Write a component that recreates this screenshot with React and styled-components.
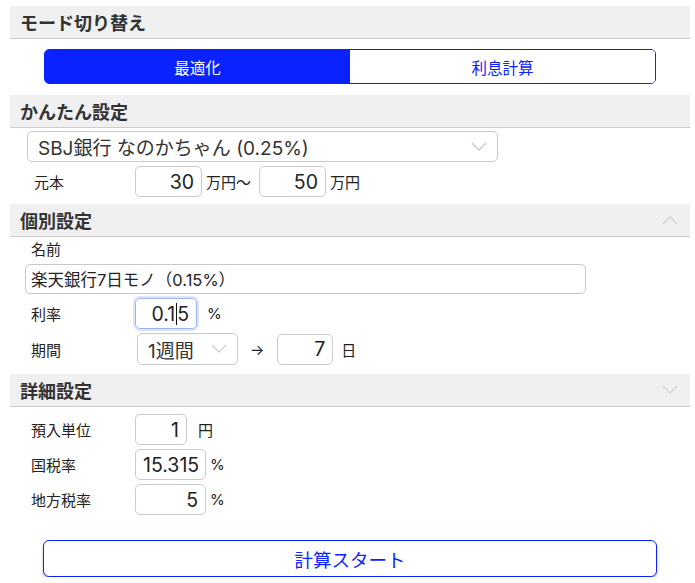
import React from "react";
import styled, { createGlobalStyle } from "styled-components";

const GlobalStyle = createGlobalStyle`
  body {
    margin: 0;
    background: #fff;
    font-family: "Inter", "Noto Sans CJK JP", sans-serif;
    color: #222;
  }
`;

const BLUE = "#0a22ff";

const Page = styled.div`
  width: 680px;
  padding: 6px 5px 0 10px;
`;

const Header = styled.div`
  height: 32px;
  background: #f0f0f0;
  border-bottom: 1px solid #cdcdcd;
  display: flex;
  align-items: center;
  justify-content: space-between;
  padding: 0 12px 0 10px;
  font-family: "Noto Sans CJK JP", sans-serif;
  font-size: 18px;
  font-weight: 700;
  color: #333;
`;

const Body = styled.div`
  padding: ${({ $pad }) => $pad || "0"};
  display: flex;
  flex-direction: column;
  gap: ${({ $gap }) => $gap || "4px"};
`;

const Segmented = styled.div`
  display: flex;
  height: 33px;
  border: 1px solid ${BLUE};
  border-radius: 5px;
  overflow: hidden;
`;

const Segment = styled.div`
  flex: 1;
  display: flex;
  align-items: center;
  justify-content: center;
  font-size: 15.5px;
  background: ${({ $active }) => ($active ? BLUE : "#fff")};
  color: ${({ $active }) => ($active ? "#fff" : BLUE)};
`;

const SelectBox = styled.div`
  width: ${({ $w }) => $w}px;
  height: ${({ $h }) => $h || 31}px;
  box-sizing: border-box;
  border: 1px solid #c9c9c9;
  border-radius: 5px;
  display: flex;
  align-items: center;
  justify-content: space-between;
  padding: 0 10px 0 10px;
  font-size: ${({ $fs }) => $fs || 19}px;
  color: #333;
  margin-left: ${({ $ml }) => $ml || 0}px;
`;

const Row = styled.div`
  display: flex;
  align-items: center;
  padding-left: ${({ $pl }) => $pl || 21}px;
  height: ${({ $h }) => $h || 31}px;
`;

const Label = styled.div`
  width: ${({ $w }) => $w || 104}px;
  font-size: 15px;
  color: #222;
`;

const NumInput = styled.input`
  width: ${({ $w }) => $w}px;
  height: 31px;
  box-sizing: border-box;
  border: 1px solid #cbcbcb;
  border-radius: 5px;
  text-align: right;
  padding: 0 7px;
  font-family: inherit;
  font-size: ${({ $fs }) => $fs || 19.5}px;
  color: #222;
  outline: none;
  margin-left: ${({ $ml }) => $ml || 0}px;
`;

const FocusField = styled.div`
  width: ${({ $w }) => $w}px;
  height: 31px;
  box-sizing: border-box;
  border: 1px solid #9fb3ee;
  border-radius: 5px;
  box-shadow: 0 0 0 2px rgba(120, 150, 240, 0.25);
  display: flex;
  align-items: center;
  justify-content: flex-end;
  padding: 0 7px;
  font-size: 19.5px;
  color: #222;
`;

const Caret = styled.span`
  display: inline-block;
  width: 1px;
  height: 22px;
  background: #111;
  margin: 0 0.5px;
`;

const Unit = styled.span`
  font-size: 15px;
  color: #222;
  margin-left: ${({ $ml }) => $ml || 5}px;
`;

const TextField = styled.input`
  width: 561px;
  height: 30px;
  box-sizing: border-box;
  border: 1px solid #c9c9c9;
  border-radius: 5px;
  padding: 0 5px;
  font-family: inherit;
  font-size: 16.5px;
  color: #222;
  outline: none;
  margin-left: 15px;
`;

const NameLabel = styled.div`
  font-size: 15px;
  padding-left: 21px;
  height: 20px;
  line-height: 20px;
`;

const StartButton = styled.button`
  margin: 25px 0 0 33px;
  width: 614px;
  height: 37px;
  border: 1px solid ${BLUE};
  border-radius: 6px;
  background: #fff;
  color: ${BLUE};
  font-family: inherit;
  font-size: 18.5px;
  box-shadow: 0 2px 3px rgba(0, 0, 0, 0.25);
`;

const Chevron = ({ up, size = 16, color = "#c8c8c8" }) => (
  <svg width={size} height={size / 2 + 2} viewBox="0 0 16 10" fill="none">
    <path
      d={up ? "M1 9 L8 2 L15 9" : "M1 1 L8 8 L15 1"}
      stroke={color}
      strokeWidth="1.3"
    />
  </svg>
);

export default function App() {
  return (
    <>
      <GlobalStyle />
      <Page>
        <Header>モード切り替え</Header>
        <Body $pad="10px 34px 11px 34px">
          <Segmented>
            <Segment $active>最適化</Segment>
            <Segment>利息計算</Segment>
          </Segmented>
        </Body>

        <Header>かんたん設定</Header>
        <Body $pad="3px 0 7px 0" $gap="4px">
          <SelectBox $w={471} $ml={17}>
            <span>SBJ銀行 なのかちゃん (0.25%)</span>
            <Chevron />
          </SelectBox>
          <Row $pl={24}>
            <Label $w={101}>元本</Label>
            <NumInput $w={67} defaultValue="30" />
            <Unit $ml={4}>万円〜</Unit>
            <NumInput $w={67} $ml={8} defaultValue="50" />
            <Unit $ml={4}>万円</Unit>
          </Row>
        </Body>

        <Header>
          個別設定
          <Chevron up color="#d2d2d2" />
        </Header>
        <Body $pad="3px 0 9px 0" $gap="4px">
          <NameLabel>名前</NameLabel>
          <TextField defaultValue="楽天銀行7日モノ（0.15%）" />
          <Row>
            <Label>利率</Label>
            <FocusField $w={62}>
              0.1<Caret />5
            </FocusField>
            <Unit $ml={10}>%</Unit>
          </Row>
          <Row $h={32}>
            <Label>期間</Label>
            <SelectBox $w={101} $h={32} $ml={2}>
              <span>1週間</span>
              <Chevron color="#cfcfcf" />
            </SelectBox>
            <Unit $ml={12}>→</Unit>
            <NumInput $w={56} $ml={13} defaultValue="7" />
            <Unit $ml={8}>日</Unit>
          </Row>
        </Body>

        <Header>
          詳細設定
          <Chevron color="#d2d2d2" />
        </Header>
        <Body $pad="7px 0 0 0" $gap="4px">
          <Row>
            <Label>預入単位</Label>
            <NumInput $w={52} defaultValue="1" />
            <Unit $ml={11}>円</Unit>
          </Row>
          <Row>
            <Label>国税率</Label>
            <NumInput $w={71} defaultValue="15.315" />
            <Unit $ml={4}>%</Unit>
          </Row>
          <Row>
            <Label>地方税率</Label>
            <NumInput $w={71} defaultValue="5" />
            <Unit $ml={4}>%</Unit>
          </Row>
        </Body>

        <StartButton>計算スタート</StartButton>
      </Page>
    </>
  );
}
